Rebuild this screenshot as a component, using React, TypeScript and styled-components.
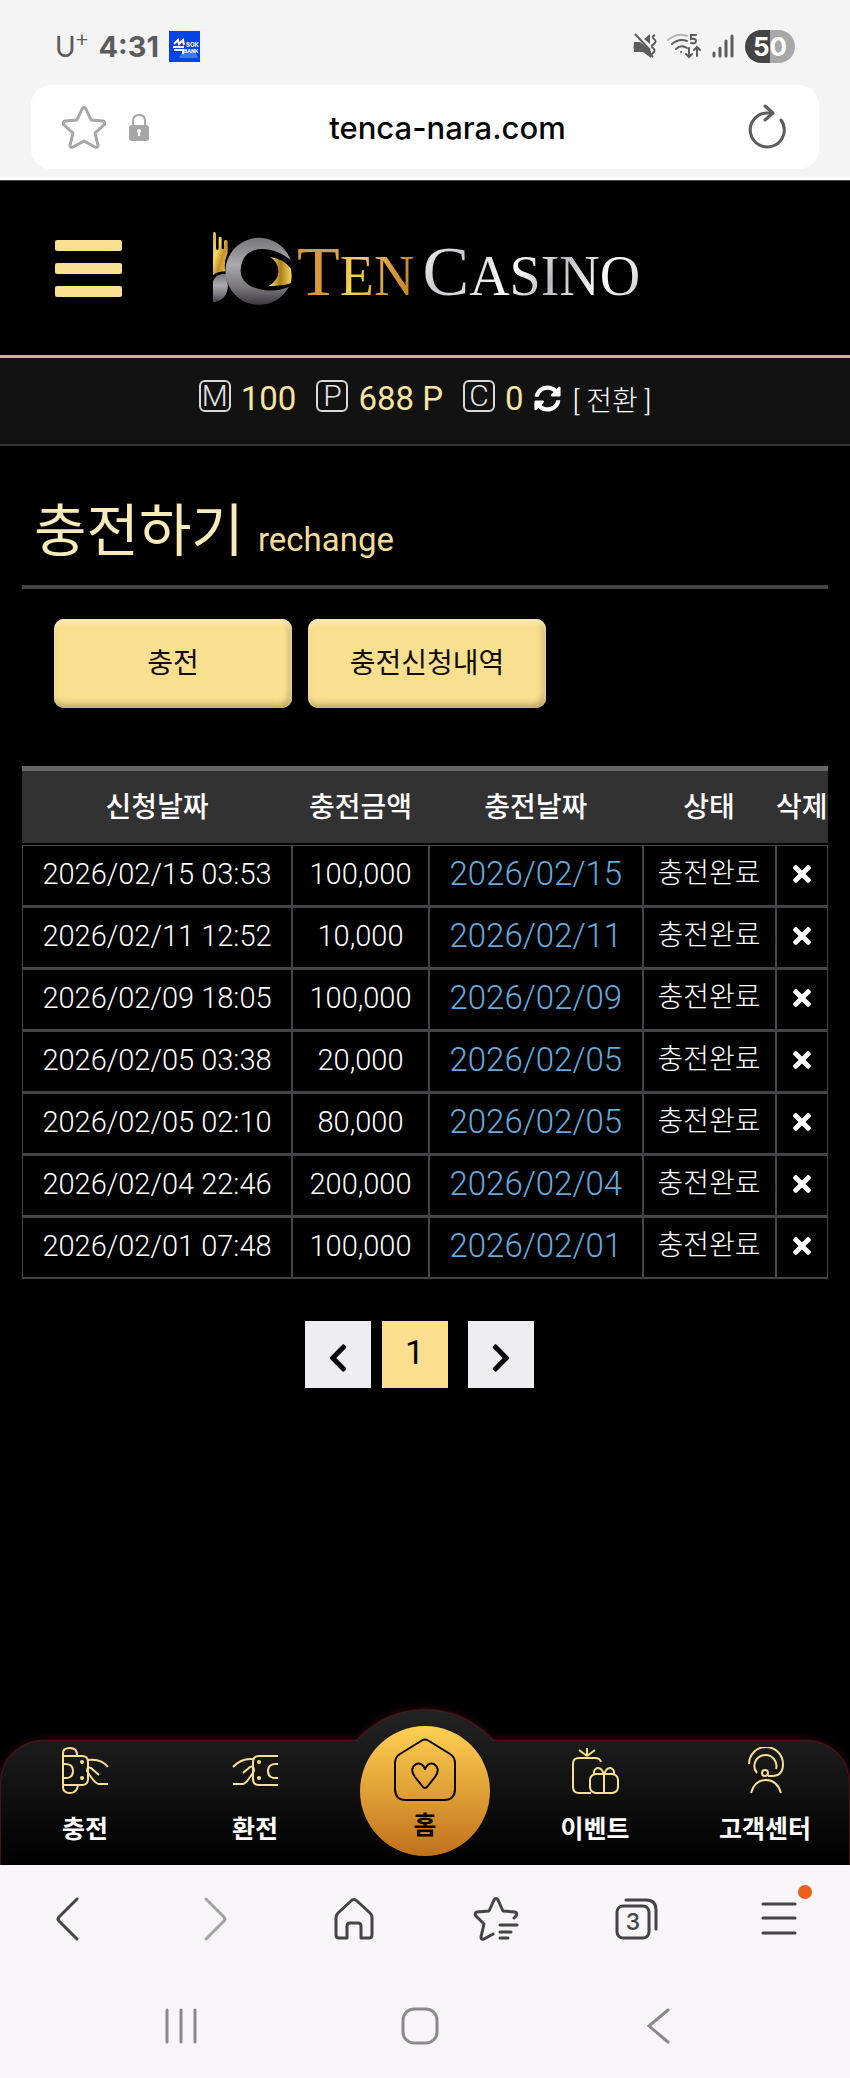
import { ReactNode } from 'react';
import { FaChevronLeft, FaChevronRight, FaSyncAlt, FaTimes } from 'react-icons/fa';
import styled, { createGlobalStyle } from 'styled-components';

const gold = '#f9e090';
const sans = 'Roboto, "Noto Sans CJK KR", sans-serif';

const GlobalStyle = createGlobalStyle`
  * {
    box-sizing: border-box;
  }
  body {
    margin: 0;
    background: #000;
    color: #fff;
    font-family: ${sans};
  }
  button,
  input {
    font: inherit;
    color: inherit;
    border: 0;
    padding: 0;
    background: none;
  }
  a {
    color: inherit;
    text-decoration: none;
  }
  svg {
    display: block;
    flex: none;
  }
`;

const deposits = [
  { requested: '2026/02/15 03:53', amount: '100,000', done: '2026/02/15' },
  { requested: '2026/02/11 12:52', amount: '10,000', done: '2026/02/11' },
  { requested: '2026/02/09 18:05', amount: '100,000', done: '2026/02/09' },
  { requested: '2026/02/05 03:38', amount: '20,000', done: '2026/02/05' },
  { requested: '2026/02/05 02:10', amount: '80,000', done: '2026/02/05' },
  { requested: '2026/02/04 22:46', amount: '200,000', done: '2026/02/04' },
  { requested: '2026/02/01 07:48', amount: '100,000', done: '2026/02/01' },
];

const balances = [
  { letter: 'M', value: '100' },
  { letter: 'P', value: '688 P' },
  { letter: 'C', value: '0' },
];

const MuteIcon = () => (
  <svg width="24" height="26" viewBox="0 0 24 26" fill="#5c5c5c">
    <path d="M1 9h6l11 9v7l-8-6H1q-1-5 0-10zM11 6l6-5v10z" />
    <path
      d="M2 1l15 16M22 2q-4 2-1 4t0 5q-4 2-1 4t0 5q-3 2 0 4"
      fill="none"
      stroke="#5c5c5c"
      strokeWidth="2"
    />
  </svg>
);

const WifiIcon = () => (
  <svg width="35" height="26" viewBox="0 0 35 26" fill="none" strokeWidth="2" strokeLinecap="round">
    <path d="M1 7Q10-1 20 3" stroke="#b5b5b5" />
    <path d="M5 11q7-6 15-3M9 16q5-5 11-1" stroke="#5c5c5c" />
    <circle cx="14" cy="19" r="1" fill="#5c5c5c" />
    <path d="M22 15v9M19 21l3 3 3-3M30 23v-9M27 17l3-3 3 3" stroke="#5c5c5c" />
    <path d="M29 2h-5v4q5-1 5 2t-5 2" stroke="#5c5c5c" />
  </svg>
);

const SignalIcon = () => (
  <svg width="23" height="24" viewBox="0 0 23 24" stroke="#5c5c5c" strokeWidth="3" strokeLinecap="round">
    <path d="M2 19v3M8 14v8M14 7v15M20 2v20" />
  </svg>
);

const BankIcon = () => (
  <svg width="31" height="31" viewBox="0 0 31 31">
    <rect width="31" height="31" fill="#0543e4" />
    <path d="M10 27l5-9 5 4 5-5 4 10z" fill="#3f78f2" />
    <path d="M5 13l4-4 1 4 4-4 1 5M4 16h11M5 19h9v4" stroke="#fff" strokeWidth="2" fill="none" />
    <text x="17" y="16" fontSize="6" fontWeight="700" fill="#fff" fontFamily="Inter, sans-serif">
      SOK
    </text>
    <text x="15" y="22" fontSize="5" fontWeight="700" fill="#fff" fontFamily="Inter, sans-serif">
      BANK
    </text>
  </svg>
);

const StarIcon = () => (
  <svg width="44" height="44" viewBox="0 0 44 44" fill="none" stroke="#a6a6a6" strokeWidth="3" strokeLinejoin="round">
    <path d="M20 4q2-3 4 0l5 11 12 1q3 1 1 4l-9 8 3 12q0 3-3 2l-11-6-11 6q-3 1-3-2l3-12-9-8q-2-3 1-4l12-1z" />
  </svg>
);

const LockIcon = () => (
  <svg width="22" height="28" viewBox="0 0 22 28">
    <path d="M5 13V8q0-6 6-6t6 6v5" fill="none" stroke="#a6a6a6" strokeWidth="2" />
    <rect x="1" y="12" width="20" height="16" rx="3" fill="#a6a6a6" />
    <circle cx="11" cy="18" r="2" fill="#fff" />
    <path d="M11 18v5" stroke="#fff" strokeWidth="2" />
  </svg>
);

const ReloadIcon = () => (
  <svg width="40" height="46" viewBox="0 0 40 46" fill="none" stroke="#5c5c5c" strokeWidth="3" strokeLinecap="round" strokeLinejoin="round">
    <path d="M25 9h-5a17 17 0 1 0 14 7" />
    <path d="M18 2l8 7-8 7" />
  </svg>
);

const LogoMark = () => (
  <svg width="81" height="74" viewBox="36 36 244 222">
    <defs>
      <linearGradient id="hand" x1="0" y1="0" x2="1" y2="1">
        <stop offset="0" stopColor="#d9a93c" />
        <stop offset=".35" stopColor="#f6dc63" />
        <stop offset=".6" stopColor="#c8912c" />
        <stop offset="1" stopColor="#f3cf55" />
      </linearGradient>
      <linearGradient id="steel" x1="0" y1="0" x2="0" y2="1">
        <stop offset="0" stopColor="#77777b" />
        <stop offset=".4" stopColor="#aaaaae" />
        <stop offset=".75" stopColor="#77757a" />
        <stop offset="1" stopColor="#3b393c" />
      </linearGradient>
      <linearGradient id="eye" x1="0" y1="0" x2="1" y2="0">
        <stop offset="0" stopColor="#fff17c" />
        <stop offset=".5" stopColor="#a87b1d" />
        <stop offset="1" stopColor="#f8d85c" />
      </linearGradient>
    </defs>
    <path
      d="M39 40q5-4 9 2v48q4 6 8 0V56q5-6 9 0v32q3 5 7 0V66q5-6 11-1v38q-12 24-7 54-24 0-37 12z"
      fill="url(#hand)"
    />
    <path d="M39 251v-64q6-22 40-23 0 18 5 36-1 44-45 51z" fill="url(#steel)" />
    <path
      d="M273 124A101 101 0 1 0 267 204Q232 218 194 214 123 203 122 153 127 91 188 90 238 92 273 124z"
      fill="url(#steel)"
    />
    <path d="M211 114q42 6 63 35 4 26-1 44-28 9-66 8 29-17 29-44-1-28-25-43z" fill="url(#eye)" />
  </svg>
);

const ChargeIcon = () => (
  <>
    <path d="M1 9V6q0-5 7-5t7 7M1 6v34q0 6 7 6t8-8M1 9h19q6 0 6 6v17q0 6-6 6H1" />
    <path d="M1 17q10-1 10 7t-10 7" />
    <circle cx="20" cy="15" r="1" />
    <circle cx="20" cy="31" r="1" />
    <path d="M26 13q13-2 20 7M37 28l-8-7q-4-2-4 3 8 13 12 13h9" />
  </>
);

const WithdrawIcon = () => (
  <>
    <path d="M46 9H27q-6 0-6 6v17q0 6 6 6h19M46 17q-10-1-10 7t10 7" />
    <circle cx="27" cy="15" r="1" />
    <circle cx="27" cy="31" r="1" />
    <path d="M21 12q-12-1-20 8M11 26l7-6q4-2 4 4-8 13-11 13H1" />
  </>
);

const EventIcon = () => (
  <>
    <path d="M19 46H7q-6 0-6-6V17q0-6 6-6h16q5 0 6 4M15 9V1M15 9L7 3M15 9l8-6" />
    <rect x="18" y="27" width="28" height="19" rx="6" />
    <path d="M32 28v18M32 28q-2-8-7-7-5 3-2 7M32 28q2-8 7-7 5 3 2 7" />
  </>
);

const SupportIcon = () => (
  <>
    <path d="M7 17A17 17 0 0 1 41 17q0 12-11 12h-4" />
    <path d="M15 26A11 11 0 1 1 34 22" />
    <circle cx="23" cy="26" r="3" />
    <path d="M9 46q4-13 15-13t15 13" />
  </>
);

const menu: { label: string; icon?: ReactNode }[] = [
  { label: '충전', icon: <ChargeIcon /> },
  { label: '환전', icon: <WithdrawIcon /> },
  { label: '홈' },
  { label: '이벤트', icon: <EventIcon /> },
  { label: '고객센터', icon: <SupportIcon /> },
];

const tools: { name: string; faded?: boolean; icon: ReactNode }[] = [
  { name: '뒤로', icon: <path d="M29 3L11 21q-2 2 0 4l18 18" /> },
  { name: '앞으로', faded: true, icon: <path d="M17 3l18 18q2 2 0 4L17 43" /> },
  {
    name: '브라우저 홈',
    icon: (
      <path d="M20 5q3-3 6 0l13 12q2 2 2 5v17q0 3-3 3h-8V30q0-3-3-3h-8q-3 0-3 3v12H8q-3 0-3-3V22q0-3 2-5z" />
    ),
  },
  {
    name: '북마크',
    icon: (
      <>
        <path d="M20 38l-9 5q-3 1-3-2l3-13-8-8q-2-3 1-4l12-1 5-11q2-3 4 0l5 11 12 1q3 1 1 4l-2 2" />
        <path d="M27 29h17M27 36h11M27 42h8" />
      </>
    ),
  },
  {
    name: '탭',
    icon: (
      <>
        <rect x="3" y="10" width="32" height="32" rx="6" />
        <path d="M12 4h20q10 0 10 10v19" />
        <text x="19" y="34" textAnchor="middle" fontSize="23" fontFamily="Inter, sans-serif" fontWeight="500" fill="currentColor" stroke="none">
          3
        </text>
      </>
    ),
  },
  { name: '메뉴', icon: <path d="M7 8h32M7 22h32M7 37h32" /> },
];

export default function App() {
  return (
    <Page>
      <GlobalStyle />
      <Browser>
        <StatusBar>
          <StatusGroup>
            <Carrier>
              U<sup>+</sup>
            </Carrier>
            <Clock>4:31</Clock>
            <BankIcon />
          </StatusGroup>
          <StatusGroup>
            <MuteIcon />
            <WifiIcon />
            <SignalIcon />
            <Battery>50</Battery>
          </StatusGroup>
        </StatusBar>
        <AddressBar>
          <IconButton aria-label="즐겨찾기">
            <StarIcon />
          </IconButton>
          <LockIcon />
          <Address aria-label="주소" defaultValue="tenca-nara.com" />
          <IconButton aria-label="새로고침">
            <ReloadIcon />
          </IconButton>
        </AddressBar>
      </Browser>

      <Header>
        <Burger aria-label="전체 메뉴">
          <span />
          <span />
          <span />
        </Burger>
        <Logo href="#">
          <LogoMark />
          <LogoGold>
            T<small>EN</small>
          </LogoGold>
          <LogoSilver>
            C<small>ASINO</small>
          </LogoSilver>
        </Logo>
      </Header>

      <Balances>
        {balances.map((balance) => (
          <Balance key={balance.letter}>
            <Letter>{balance.letter}</Letter>
            {balance.value}
          </Balance>
        ))}
        <Convert>
          <FaSyncAlt size={27} />[ 전환 ]
        </Convert>
      </Balances>

      <Main>
        <Title>
          충전하기 <small>rechange</small>
        </Title>
        <Actions>
          <ActionButton>충전</ActionButton>
          <ActionButton>충전신청내역</ActionButton>
        </Actions>
        <Table>
          <colgroup>
            <col width="33.5%" />
            <col width="17%" />
            <col width="26.5%" />
            <col width="16.5%" />
            <col />
          </colgroup>
          <thead>
            <tr>
              <th>신청날짜</th>
              <th>충전금액</th>
              <th>충전날짜</th>
              <th>상태</th>
              <th>삭제</th>
            </tr>
          </thead>
          <tbody>
            {deposits.map((deposit) => (
              <tr key={deposit.requested}>
                <NumberCell>{deposit.requested}</NumberCell>
                <NumberCell>{deposit.amount}</NumberCell>
                <DoneCell>{deposit.done}</DoneCell>
                <td>충전완료</td>
                <td>
                  <DeleteButton aria-label="삭제">
                    <FaTimes size={26} />
                  </DeleteButton>
                </td>
              </tr>
            ))}
          </tbody>
        </Table>
        <Pages>
          <PageButton aria-label="이전">
            <FaChevronLeft size={32} />
          </PageButton>
          <PageButton $current>1</PageButton>
          <PageButton aria-label="다음">
            <FaChevronRight size={32} />
          </PageButton>
        </Pages>
      </Main>

      <Menu>
        <MenuShape />
        {menu.map((item) =>
          item.icon ? (
            <MenuItem key={item.label} href="#">
              <svg width="47" height="47" viewBox="0 0 47 47" fill="none" stroke={gold} strokeWidth="2" strokeLinejoin="round">
                {item.icon}
              </svg>
              {item.label}
            </MenuItem>
          ) : (
            <HomeItem key={item.label} href="#">
              <svg width="64" height="64" viewBox="0 0 64 64" fill="none" stroke="#080400" strokeWidth="2" strokeLinejoin="round">
                <path d="M28 3q4-3 8 0l21 13q5 3 5 9v26q0 11-11 11H13Q2 62 2 51V25q0-6 5-9z" />
                <path d="M32 31q-3-7-9-5-7 5-1 13l8 10q2 2 4 0l8-10q6-8-1-13-6-2-9 5z" />
              </svg>
              {item.label}
            </HomeItem>
          ),
        )}
      </Menu>

      <Toolbar>
        {tools.map((tool) => (
          <ToolButton key={tool.name} aria-label={tool.name} $faded={tool.faded}>
            <svg width="46" height="46" viewBox="0 0 46 46" fill="none" stroke="currentColor" strokeWidth="3" strokeLinecap="round" strokeLinejoin="round">
              {tool.icon}
            </svg>
            {tool.name === '메뉴' && <Dot />}
          </ToolButton>
        ))}
      </Toolbar>
      <SystemBar>
        <IconButton aria-label="최근 앱">
          <svg width="36" height="38" viewBox="0 0 36 38" stroke="#8b898c" strokeWidth="3" strokeLinecap="round">
            <path d="M3 3v32M17 3v32M31 3v32" />
          </svg>
        </IconButton>
        <IconButton aria-label="홈 화면">
          <svg width="38" height="38" viewBox="0 0 38 38" fill="none" stroke="#8b898c" strokeWidth="3">
            <rect x="2" y="2" width="34" height="34" rx="11" />
          </svg>
        </IconButton>
        <IconButton aria-label="이전 화면">
          <svg width="38" height="38" viewBox="0 0 38 38" fill="none" stroke="#8b898c" strokeWidth="3" strokeLinecap="round">
            <path d="M29 3L10 19l19 16" />
          </svg>
        </IconButton>
      </SystemBar>
    </Page>
  );
}

const Page = styled.div`
  display: flex;
  flex-direction: column;
  min-height: 100vh;
`;
const Browser = styled.header`
  padding: 0 31px 8px;
  background: #f4f4f4;
  color: #5c5c5c;
  border-bottom: 3px solid #fdfdfd;
  font-family: Inter, sans-serif;
`;
const StatusBar = styled.div`
  display: flex;
  justify-content: space-between;
  padding: 28px 24px 21px;
`;
const StatusGroup = styled.div`
  display: flex;
  align-items: center;
  gap: 10px;
  height: 36px;
`;
const Carrier = styled.span`
  font-family: Lato, sans-serif;
  font-size: 28px;
  sup {
    font-size: 22px;
    line-height: 0;
  }
`;
const Clock = styled.time`
  font-size: 29px;
  font-weight: 700;
`;
const Battery = styled.span`
  width: 50px;
  border-radius: 17px;
  background: linear-gradient(90deg, #444 50%, #a8a8a8 50%);
  color: #fff;
  font-size: 26px;
  font-weight: 700;
  line-height: 33px;
  text-align: center;
`;
const AddressBar = styled.div`
  display: flex;
  align-items: center;
  gap: 22px;
  height: 84px;
  padding: 0 32px 0 31px;
  border-radius: 20px;
  background: #fff;
`;
const Address = styled.input`
  flex: 1;
  min-width: 0;
  padding-right: 2px;
  color: #050505;
  font-size: 31px;
  font-weight: 500;
  text-align: center;
`;
const IconButton = styled.button`
  display: flex;
  justify-content: center;
`;
const Header = styled.div`
  display: flex;
  align-items: center;
  gap: 90px;
  height: 178px;
  padding: 0 55px;
  border-top: 1px solid #444;
  border-bottom: 3px solid #cdb57c;
`;
const Burger = styled.button`
  display: grid;
  gap: 12px;
  width: 67px;
  span {
    height: 11px;
    border-radius: 2px;
    background: ${gold};
  }
`;
const Logo = styled.a`
  display: flex;
  align-items: center;
  font-family: 'Liberation Serif', serif;
  font-size: 70px;
  line-height: 74px;
  span {
    padding-top: 12px;
  }
  small {
    font-size: 56px;
  }
`;
const LogoGold = styled.span`
  margin: 0 8px 0 4px;
  color: transparent;
  background: linear-gradient(100deg, #d99a35, #dc9a3a 30%, #f3d55c 50%, #e5b048 65%, #bf7a20);
  background-clip: text;
`;
const LogoSilver = styled.span`
  color: transparent;
  background: linear-gradient(120deg, #fff, #c9c9cd 20%, #fff 45%, #b9b9bd 60%, #fff 80%, #c4c4c8);
  background-clip: text;
`;
const Balances = styled.div`
  display: flex;
  justify-content: center;
  align-items: center;
  gap: 20px;
  height: 88px;
  padding-bottom: 5px;
  background: #131212;
  border-bottom: 2px solid #333;
`;
const Balance = styled.span`
  display: flex;
  align-items: center;
  gap: 10px;
  color: #f6e4a0;
  font-size: 33px;
  line-height: 40px;
`;
const Letter = styled.span`
  width: 32px;
  height: 32px;
  margin-bottom: 6px;
  border: 2px solid #d8d8d8;
  border-radius: 6px;
  color: #e4e4e4;
  font-size: 30px;
  font-weight: 300;
  line-height: 28px;
  text-align: center;
`;
const Convert = styled.button`
  display: flex;
  align-items: center;
  gap: 12px;
  margin-left: -10px;
  font-size: 28px;
  font-weight: 300;
`;
const Main = styled.main`
  flex: 1;
  padding: 36px 22px;
`;
const Title = styled.h1`
  margin: 0;
  padding: 9px 12px 5px;
  border-bottom: 4px solid #444;
  color: #f9ebb8;
  font-size: 57px;
  font-weight: 400;
  line-height: 81px;
  small {
    color: #f3dc9a;
    font-size: 33px;
  }
`;
const Actions = styled.div`
  display: flex;
  gap: 16px;
  padding: 30px 32px 58px;
`;
const ActionButton = styled.button`
  width: 238px;
  height: 89px;
  padding-bottom: 5px;
  border-radius: 10px;
  background: ${gold};
  box-shadow: inset 0 3px 5px #fdeec0, inset -2px -3px 7px #b39a5c;
  color: #120c04;
  font-size: 28px;
`;
const Table = styled.table`
  width: 100%;
  table-layout: fixed;
  border-spacing: 0;
  font-size: 28px;
  font-weight: 300;
  text-align: center;
  white-space: nowrap;
  th {
    height: 79px;
    padding: 0 0 4px;
    border-top: 5px solid #666;
    border-bottom: 2px solid #000;
    background: #333233;
    font-weight: 500;
  }
  td {
    height: 62px;
    padding: 0 0 4px;
    border: 1px solid #444346;
    border-bottom-width: 2px;
    line-height: 40px;
  }
`;
const NumberCell = styled.td`
  font-size: 29px;
`;
const DoneCell = styled.td`
  color: #62aade;
  font-size: 33px;
`;
const DeleteButton = styled.button`
  display: block;
  margin: 0 auto;
`;
const Pages = styled.nav`
  display: flex;
  justify-content: center;
  padding: 42px 12px 42px 0;
`;
const PageButton = styled.button<{ $current?: boolean }>`
  display: flex;
  justify-content: center;
  align-items: center;
  width: 66px;
  height: 67px;
  margin: ${({ $current }) => ($current ? '0 20px 0 11px' : '0')};
  padding: ${({ $current }) => ($current ? '0 0 5px' : '6px 0 0')};
  background: ${({ $current }) => ($current ? '#fbdf8f' : '#eeeef0')};
  color: #050505;
  font-size: 34px;
`;
const Menu = styled.nav`
  position: relative;
  display: grid;
  grid-template-columns: repeat(5, 1fr);
  height: 124px;
`;
// the bar and the bump share one drop shadow, so the red outline follows both
const MenuShape = styled.div`
  position: absolute;
  inset: 0;
  filter: drop-shadow(0 0 1px #a02a3c) drop-shadow(0 0 4px #3a0c12);
  &::before {
    content: '';
    position: absolute;
    top: -31px;
    left: calc(50% - 90px);
    width: 180px;
    height: 155px;
    border-radius: 90px 90px 0 0;
    background: linear-gradient(#232323, #1b1c1b 31px, #000);
  }
  &::after {
    content: '';
    position: absolute;
    inset: 0 1px;
    border-radius: 42px 42px 0 0;
    background: linear-gradient(#1b1c1b, #000);
  }
`;
const MenuItem = styled.a`
  position: relative;
  display: flex;
  flex-direction: column;
  align-items: center;
  gap: 18px;
  padding-top: 6px;
  font-size: 25px;
  font-weight: 700;
  line-height: 36px;
`;
const HomeItem = styled(MenuItem)`
  justify-self: center;
  gap: 6px;
  width: 130px;
  height: 130px;
  margin-top: -15px;
  padding-top: 12px;
  border-radius: 50%;
  background: linear-gradient(#ffd054, #e0a136 50%, #c1701d);
  color: #080400;
`;
const Toolbar = styled.div`
  position: relative;
  display: grid;
  grid-template-columns: repeat(6, 1fr);
  height: 108px;
  background: #f7f5f7;
`;
const ToolButton = styled.button<{ $faded?: boolean }>`
  position: relative;
  display: flex;
  justify-content: center;
  align-items: center;
  color: ${({ $faded }) => ($faded ? '#a3a1a4' : '#454346')};
`;
const Dot = styled.i`
  position: absolute;
  top: 20px;
  left: calc(50% + 19px);
  width: 14px;
  height: 14px;
  border-radius: 50%;
  background: #ee5d1c;
`;
const SystemBar = styled.div`
  display: grid;
  grid-template-columns: repeat(3, 1fr);
  align-items: center;
  height: 105px;
  padding: 0 73px 0 63px;
  background: #f7f5f7;
`;
